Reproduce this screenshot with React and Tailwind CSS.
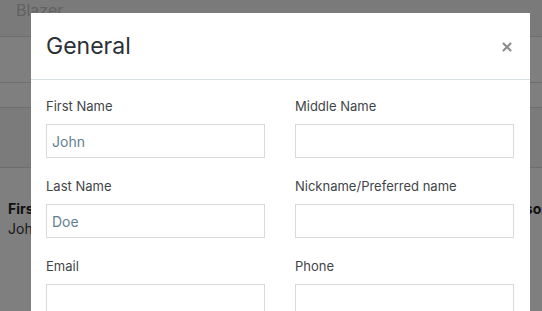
import { X } from 'lucide-react'

const fields = [
  { label: 'First Name', value: 'John' },
  { label: 'Middle Name', value: '' },
  { label: 'Last Name', value: 'Doe' },
  { label: 'Nickname/Preferred name', value: '' },
  { label: 'Email', value: '' },
  { label: 'Phone', value: '' },
]

/**
 * Page that sits behind the dialog, dimmed by the overlay.
 *
 * @returns {JSX.Element} Background page.
 */
function BackgroundPage() {
  return (
    <div className="flex h-full flex-col bg-white">
      <div className="flex h-[37px] items-start border-b border-[#dcdcdc] bg-[#f4f4f4] px-4 pt-[1px]">
        <span className="text-[16px] leading-[18px] text-[#c4c4c4]">Blazer</span>
      </div>
      <div className="h-[46px] border-b border-[#dcdcdc]" />
      <div className="h-[25px] border-b border-[#dcdcdc]" />
      <div className="h-[60px] border-b border-[#dcdcdc] bg-[#f6f6f6]" />
      <div className="flex justify-between px-2 pt-[31px]">
        <div className="flex flex-col text-[14px] leading-[20px]">
          <span className="font-bold text-[#222]">First Name</span>
          <span className="text-[#333]">John</span>
        </div>
        <div className="flex flex-col text-[14px] leading-[20px]">
          <span className="mr-[-16px] font-bold text-[#222]">Person</span>
        </div>
      </div>
    </div>
  )
}

/**
 * Labelled text input used in the dialog grid.
 *
 * @param {{ label: string, value: string }} props - Field label and value.
 * @returns {JSX.Element} Field.
 */
function Field({ label, value }) {
  return (
    <label className="flex flex-col">
      <span className="h-[18px] text-[13px] leading-[18px] text-[#3f4549]">{label}</span>
      <input
        type="text"
        defaultValue={value}
        className="mt-[9px] h-[34px] w-full border border-[#d6dadc] bg-white pl-[5px] text-[14px] text-[#5f7f90] outline-none"
      />
    </label>
  )
}

export default function App() {
  return (
    <div
      className="relative h-[311px] w-[542px] overflow-hidden"
      style={{ fontFamily: 'Inter, "Noto Sans", sans-serif' }}
    >
      <BackgroundPage />
      <div className="absolute inset-0 bg-black/50" />

      <div className="absolute left-[31px] top-[13px] h-[320px] w-[499px] bg-white">
        <div className="flex h-[67px] items-center justify-between border-b border-[#d9e0e4] pl-[15px] pr-[13px]">
          <h2 className="text-[23px] font-normal text-[#2b3136]">General</h2>
          <button type="button" className="flex h-5 w-5 items-center justify-center pt-[2px] text-[#8a8a8a]">
            <X size={14} strokeWidth={3.5} />
          </button>
        </div>
        <div className="grid grid-cols-[219px_219px] gap-x-[30px] gap-y-[19px] px-[15px] pt-[17px]">
          {fields.map((field) => (
            <Field key={field.label} label={field.label} value={field.value} />
          ))}
        </div>
      </div>
    </div>
  )
}
